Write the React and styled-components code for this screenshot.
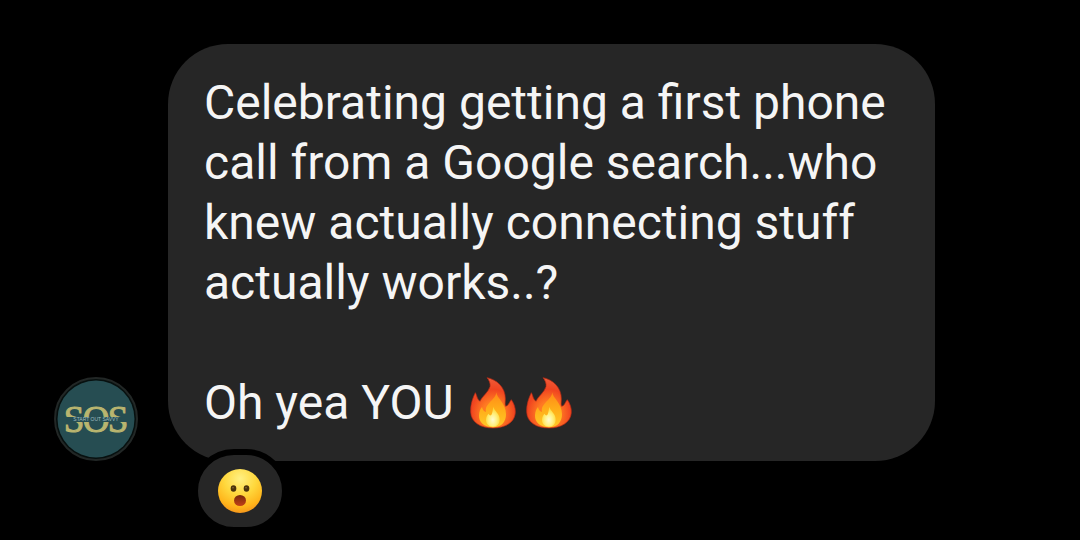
import React from 'react';
import styled, { createGlobalStyle } from 'styled-components';

const GlobalStyle = createGlobalStyle`
  body {
    margin: 0;
    background: #000;
    font-family: Roboto, "Liberation Sans", sans-serif;
  }
`;

const Thread = styled.main`
  padding: 44px 145px 79px 54px;
`;

const MessageRow = styled.article`
  display: flex;
  align-items: flex-end;
  gap: 30px;
`;

const Avatar = styled.svg`
  flex: none;
  width: 84px;
  height: 84px;
`;

const Bubble = styled.div`
  position: relative;
  flex: 1;
  min-width: 0;
  padding: 29px 36px 28px;
  border-radius: 60px;
  background: #262626;
  color: #f5f5f5;
`;

const Paragraph = styled.p`
  margin: 0 0 ${({ $spaced }) => ($spaced ? '60px' : '0')};
  font-size: 48px;
  line-height: 60px;
`;

const FlameIcon = styled.svg`
  width: 46px;
  height: 52px;
  margin: 0 5px;
  vertical-align: -10px;
`;

const Reaction = styled.button`
  position: absolute;
  left: 24px;
  bottom: -72px;
  display: flex;
  align-items: center;
  justify-content: center;
  box-sizing: border-box;
  width: 96px;
  height: 84px;
  padding: 0;
  border: 6px solid #000;
  border-radius: 42px;
  background: #262626;
`;

const FaceIcon = styled.svg`
  width: 46px;
  height: 46px;
`;

function Flame({ id }) {
  return (
    <FlameIcon viewBox="-2 -2 138 156" role="img" aria-label="fire">
      <defs>
        <radialGradient id={`${id}-outer`} cx="0.5" cy="0.72" r="0.7">
          <stop offset="0.35" stopColor="#ff7a22" />
          <stop offset="0.7" stopColor="#f04420" />
          <stop offset="1" stopColor="#ef5a38" />
        </radialGradient>
        <linearGradient id={`${id}-inner`} x1="0" y1="0" x2="0" y2="1">
          <stop offset="0" stopColor="#ff8a17" />
          <stop offset="0.5" stopColor="#ffae19" />
          <stop offset="1" stopColor="#ffc928" />
        </linearGradient>
        <radialGradient id={`${id}-core`} cx="0.5" cy="0.65" r="0.55">
          <stop offset="0" stopColor="#fffbd0" />
          <stop offset="0.55" stopColor="#fff080" />
          <stop offset="1" stopColor="#ffd83a" />
        </radialGradient>
      </defs>
      <path
        d="M49 0C78 5 105 30 104 64C104 74 102 81 105 86C114 84 115 74 122 66C130 77 135 91 134 105C132 134 104 151 67 151C29 151 1 134 0 103C-1 79 7 60 14 45C19 53 19 65 28 71C33 57 53 44 58 27C60 17 55 7 49 0Z"
        fill={`url(#${id}-outer)`}
        stroke="#b72914"
        strokeWidth="2"
      />
      <path
        d="M77 44C78 62 106 76 106 110C106 133 92 149 67 149C40 149 24 133 25 113C26 100 29 94 34 88C37 97 38 101 46 103C41 77 75 68 77 44Z"
        fill={`url(#${id}-inner)`}
      />
      <path
        d="M68 88C72 101 87 108 87 125C87 140 79 147 67 147C54 147 46 139 46 127C46 116 51 112 53 108C57 112 57 115 62 112C66 105 66 98 68 88Z"
        fill={`url(#${id}-core)`}
      />
    </FlameIcon>
  );
}

function SurprisedFace() {
  return (
    <FaceIcon viewBox="0 0 46 46" role="img" aria-label="surprised">
      <defs>
        <radialGradient id="face" cx="0.5" cy="0.22" r="0.8">
          <stop offset="0" stopColor="#fff083" />
          <stop offset="0.45" stopColor="#ffd83d" />
          <stop offset="0.8" stopColor="#ffb51b" />
          <stop offset="1" stopColor="#f4931c" />
        </radialGradient>
        <linearGradient id="mouth" x1="0" y1="0" x2="0" y2="1">
          <stop offset="0" stopColor="#76290a" />
          <stop offset="1" stopColor="#c34018" />
        </linearGradient>
      </defs>
      <circle cx="23" cy="23" r="22" fill="url(#face)" />
      <ellipse cx="16.5" cy="20.5" rx="2.8" ry="3.2" fill="#4b330b" />
      <ellipse cx="29.5" cy="20.5" rx="2.8" ry="3.2" fill="#4b330b" />
      <circle cx="16" cy="19.8" r="0.8" fill="#8d743c" />
      <circle cx="29" cy="19.8" r="0.8" fill="#8d743c" />
      <ellipse cx="23" cy="32.5" rx="6" ry="5.6" fill="url(#mouth)" />
    </FaceIcon>
  );
}

function SosAvatar() {
  return (
    <Avatar viewBox="0 0 84 84" role="img" aria-label="SOS Start Out Savvy">
      <circle cx="42" cy="42" r="41" fill="#07100f" stroke="#222726" strokeWidth="2" />
      <circle cx="42" cy="42" r="38.5" fill="#264d52" />
      <text
        y="55"
        textAnchor="middle"
        fontFamily="Liberation Serif, serif"
        fontSize="37"
        fill="#b9b56f"
        stroke="#b9b56f"
        strokeWidth="1"
      >
        <tspan x="20">S</tspan>
        <tspan x="42">O</tspan>
        <tspan x="64">S</tspan>
      </text>
      <rect x="8" y="40" width="68" height="5" fill="#264d52" />
      <text
        x="42"
        y="44"
        textAnchor="middle"
        fontFamily="Liberation Sans, sans-serif"
        fontSize="5"
        fill="#9fbdc0"
      >
        START OUT SAVVY
      </text>
    </Avatar>
  );
}

export default function App() {
  return (
    <>
      <GlobalStyle />
      <Thread>
        <MessageRow>
          <SosAvatar />
          <Bubble>
            <Paragraph $spaced>
              Celebrating getting a first phone call from a Google search...who knew actually
              connecting stuff actually works..?
            </Paragraph>
            <Paragraph>
              Oh yea YOU <Flame id="flame-a" />
              <Flame id="flame-b" />
            </Paragraph>
            <Reaction type="button" aria-label="Surprised reaction">
              <SurprisedFace />
            </Reaction>
          </Bubble>
        </MessageRow>
      </Thread>
    </>
  );
}
